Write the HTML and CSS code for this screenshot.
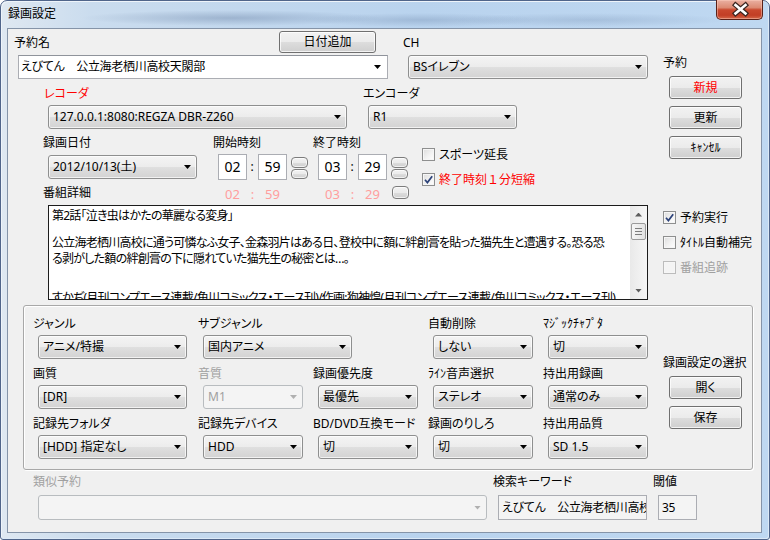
FILE: index.html
```html
<!DOCTYPE html>
<html lang="ja">
<head>
<meta charset="utf-8">
<title>録画設定</title>
<link rel="stylesheet" href="styles.css">
</head>
<body>
<div class="window">
  <div class="titlebar">
    <span class="title">録画設定</span>
    <div class="close">
      <svg width="47" height="20" viewBox="0 0 47 20">
        <path d="M18.5 6 L28.5 14.5 M28.5 6 L18.5 14.5" stroke="#3b2520" stroke-width="5" stroke-linecap="square" fill="none"/>
        <path d="M18.5 6 L28.5 14.5 M28.5 6 L18.5 14.5" stroke="#ffffff" stroke-width="2.6" stroke-linecap="square" fill="none"/>
      </svg>
    </div>
  </div>
  <div class="client">
    <div class="top">
      <div class="main">
        <div class="r1">
          <span class="lbl name-lbl">予約名</span>
          <button class="btn date-btn">日付追加</button>
          <span class="lbl ch-lbl">CH</span>
        </div>
        <div class="r2">
          <div class="combo edit name-combo"><span class="val">えびてん　公立海老栖川高校天閖部</span><span class="arrow"></span></div>
          <div class="combo ch-combo"><span class="val">BSイレブン</span><span class="arrow"></span></div>
        </div>
        <div class="r3">
          <span class="lbl red rec-lbl">レコーダ</span>
          <span class="lbl">エンコーダ</span>
        </div>
        <div class="r4">
          <div class="combo rec-combo"><span class="val">127.0.0.1:8080:REGZA DBR-Z260</span><span class="arrow"></span></div>
          <div class="combo enc-combo"><span class="val">R1</span><span class="arrow"></span></div>
        </div>
        <div class="r5">
          <div class="c-date">
            <span class="lbl">録画日付</span>
            <div class="combo date-combo"><span class="val">2012/10/13(土)</span><span class="arrow"></span></div>
            <span class="lbl detail-lbl">番組詳細</span>
          </div>
          <div class="c-time">
            <span class="lbl">開始時刻</span>
            <div class="time">
              <span class="tbox">02</span><span class="colon">:</span><span class="tbox">59</span>
              <span class="spin"><span class="sbtn"></span><span class="sbtn low"></span></span>
            </div>
            <div class="ref"><span class="rv">02</span><span class="rc">:</span><span class="rv">59</span></div>
          </div>
          <div class="c-time c-end">
            <span class="lbl">終了時刻</span>
            <div class="time">
              <span class="tbox">03</span><span class="colon">:</span><span class="tbox">29</span>
              <span class="spin"><span class="sbtn"></span><span class="sbtn low"></span></span>
            </div>
            <div class="ref"><span class="rv">03</span><span class="rc">:</span><span class="rv">29</span><span class="sbtn big"></span></div>
          </div>
          <div class="c-checks">
            <div class="chk"><span class="box"></span><span>スポーツ延長</span></div>
            <div class="chk red gap"><span class="box"><svg width="11" height="11" viewBox="0 0 11 11"><path d="M2 5.8 L4.4 8.6 L9.2 2.2" stroke="#2c4279" stroke-width="1.7" fill="none"/></svg></span><span>終了時刻<span class="fw">１</span>分短縮</span></div>
          </div>
        </div>
        <div class="tarea">
          <div class="tcontent">
            <div class="ln">第2話「泣き虫はかたの華麗なる変身」</div>
            <div class="blank1"></div>
            <div class="ln">公立海老栖川高校に通う可憐なふ女子、金森羽片はある日、登校中に額に絆創膏を貼った猫先生と遭遇する。恐る恐</div>
            <div class="ln">る剥がした額の絆創膏の下に隠れていた猫先生の秘密とは…。</div>
            <div class="blank2"></div>
            <div class="ln">すかぢ(月刊コンプエース連載/角川コミックス・エース刊)/作画:狗神煌(月刊コンプエース連載/角川コミックス・エース刊)</div>
          </div>
          <div class="vscroll">
            <div class="sb-btn"><span class="tri up"></span></div>
            <div class="sb-thumb"><span></span><span></span><span></span></div>
            <div class="sb-track"></div>
            <div class="sb-btn"><span class="tri down"></span></div>
          </div>
        </div>
      </div>
      <div class="side">
        <span class="lbl rsv-lbl">予約</span>
        <button class="btn side-btn red first">新規</button>
        <button class="btn side-btn">更新</button>
        <button class="btn side-btn">ｷｬﾝｾﾙ</button>
        <div class="chk side-chk1"><span class="box"><svg width="11" height="11" viewBox="0 0 11 11"><path d="M2 5.8 L4.4 8.6 L9.2 2.2" stroke="#2c4279" stroke-width="1.7" fill="none"/></svg></span><span>予約実行</span></div>
        <div class="chk gap"><span class="box"></span><span>ﾀｲﾄﾙ自動補完</span></div>
        <div class="chk gap disabled"><span class="box"></span><span>番組追跡</span></div>
      </div>
    </div>

    <div class="group">
      <div class="ggrid">
        <div class="fld"><span class="lbl">ジャンル</span><div class="combo wide"><span class="val">アニメ/特撮</span><span class="arrow"></span></div></div>
        <div class="fld span2"><span class="lbl">サブジャンル</span><div class="combo wide"><span class="val">国内アニメ</span><span class="arrow"></span></div></div>
        <div class="fld"><span class="lbl">自動削除</span><div class="combo"><span class="val">しない</span><span class="arrow"></span></div></div>
        <div class="fld"><span class="lbl">ﾏｼﾞｯｸﾁｬﾌﾟﾀ</span><div class="combo"><span class="val">切</span><span class="arrow"></span></div></div>

        <div class="fld"><span class="lbl">画質</span><div class="combo wide"><span class="val">[DR]</span><span class="arrow"></span></div></div>
        <div class="fld"><span class="lbl gray">音質</span><div class="combo disabled"><span class="val">M1</span><span class="arrow"></span></div></div>
        <div class="fld"><span class="lbl">録画優先度</span><div class="combo"><span class="val">最優先</span><span class="arrow"></span></div></div>
        <div class="fld"><span class="lbl">ﾗｲﾝ音声選択</span><div class="combo"><span class="val">ステレオ</span><span class="arrow"></span></div></div>
        <div class="fld"><span class="lbl">持出用録画</span><div class="combo"><span class="val">通常のみ</span><span class="arrow"></span></div></div>

        <div class="fld"><span class="lbl">記録先フォルダ</span><div class="combo wide"><span class="val">[HDD] 指定なし</span><span class="arrow"></span></div></div>
        <div class="fld"><span class="lbl">記録先デバイス</span><div class="combo"><span class="val">HDD</span><span class="arrow"></span></div></div>
        <div class="fld"><span class="lbl">BD/DVD互換モード</span><div class="combo"><span class="val">切</span><span class="arrow"></span></div></div>
        <div class="fld"><span class="lbl">録画のりしろ</span><div class="combo"><span class="val">切</span><span class="arrow"></span></div></div>
        <div class="fld"><span class="lbl">持出用品質</span><div class="combo"><span class="val">SD 1.5</span><span class="arrow"></span></div></div>
      </div>
      <div class="gside">
        <span class="lbl">録画設定の選択</span>
        <button class="btn side-btn first">開く</button>
        <button class="btn side-btn">保存</button>
      </div>
    </div>

    <div class="bottom">
      <div class="bf1">
        <span class="lbl gray">類似予約</span>
        <div class="combo disabled similar"><span class="val"></span><span class="arrow"></span></div>
      </div>
      <div class="bf2">
        <span class="lbl">検索キーワード</span>
        <div class="tbx kw"><span class="val">えびてん　公立海老栖川高校</span></div>
      </div>
      <div class="bf3">
        <span class="lbl">閾値</span>
        <div class="tbx th"><span class="val">35</span></div>
      </div>
    </div>
  </div>
</div>
</body>
</html>
```

FILE: styles.css
```css
* { box-sizing: border-box; margin: 0; padding: 0; }
html, body { width: 770px; height: 540px; overflow: hidden; }
body {
  font-family: "Noto Sans", "Noto Sans CJK JP", sans-serif;
  font-size: 12px;
  line-height: 16px;
  color: #000;
  font-feature-settings: "palt" 1;
  background: #ffffff;
}

/* window frame */
.window {
  width: 770px;
  height: 540px;
  display: flex;
  flex-direction: column;
  padding: 0 7px 6px 6px;
  border: 1px solid #50658a;
  border-radius: 7px 7px 3px 3px;
  background:
    radial-gradient(150px 8px at 230px 17px, rgba(70, 95, 135, 0.30), rgba(70, 95, 135, 0)),
    radial-gradient(120px 7px at 420px 19px, rgba(70, 95, 135, 0.22), rgba(70, 95, 135, 0)),
    radial-gradient(140px 7px at 590px 19px, rgba(70, 95, 135, 0.18), rgba(70, 95, 135, 0)),
    linear-gradient(to right, #dfe8f1 0, #cadcee 90px, #b9d3ee 420px, #bfd8f1 770px);
  box-shadow: inset 1px 1px 0 #eef4fa, inset -1px -1px 0 #dce9f6;
}
.titlebar {
  flex: none;
  height: 27px;
  display: flex;
  justify-content: space-between;
  align-items: flex-start;
}
.title {
  margin: 5px 0 0 1px;
  line-height: 16px;
}
.close {
  width: 47px;
  height: 20px;
  margin: -1px -1px 0 0;
  border: 1px solid #5a2118;
  border-top: none;
  border-radius: 0 0 5px 5px;
  background: linear-gradient(#eab0a2 0%, #dc8a73 40%, #c9482e 52%, #c23e25 80%, #d4684a 100%);
  box-shadow: inset 0 0 0 1px rgba(255, 210, 195, 0.45);
}
.close svg { display: block; margin-top: -1px; }

.client {
  width: 755px;
  height: 505px;
  border: 1px solid #8594a8;
  background: #f0f0f0;
  display: flex;
  flex-direction: column;
}

/* generic controls */
.lbl { display: block; height: 16px; line-height: 16px; white-space: nowrap; }
.red { color: #ff0000; }
.gray { color: #a0a0a0; }
.fw { font-feature-settings: normal; }

.btn {
  font: inherit;
  font-feature-settings: "palt" 1;
  color: #000;
  display: flex;
  align-items: center;
  justify-content: center;
  border: 1px solid #707070;
  border-radius: 3px;
  background: linear-gradient(#f2f2f2 0%, #ebebeb 50%, #dddddd 51%, #cfcfcf 100%);
  box-shadow: inset 0 0 0 1px rgba(255, 255, 255, 0.75);
}
.btn.red { color: #ff0000; }

.combo {
  display: flex;
  align-items: center;
  height: 24px;
  border: 1px solid #8e8f8f;
  border-radius: 3px;
  background: linear-gradient(#f4f4f4 0%, #ececec 50%, #dfdfdf 51%, #d3d3d3 100%);
  box-shadow: inset 0 0 0 1px rgba(255, 255, 255, 0.7);
  white-space: nowrap;
  overflow: hidden;
}
.combo .val { flex: 1; padding-left: 4px; overflow: hidden; }
.arrow {
  flex: none;
  width: 7px;
  height: 4px;
  margin-right: 5px;
  background: #000;
  clip-path: polygon(0 0, 100% 0, 50% 100%);
}
.combo.edit {
  border-color: #abadb3;
  border-top-color: #8f939b;
  border-radius: 0;
  background: #ffffff;
  box-shadow: none;
}
.combo.edit .val { padding-left: 2px; letter-spacing: -0.3px; }
.combo.edit .arrow { margin-right: 6px; }
.combo.disabled {
  border-color: #b8bcbf;
  background: #f4f4f4;
  box-shadow: none;
  color: #a0a0a0;
}
.combo.disabled .arrow { background: #b0b0b0; }

.chk { display: flex; align-items: center; height: 13px; white-space: nowrap; }
.chk .box {
  flex: none;
  width: 13px;
  height: 13px;
  margin-right: 4px;
  border: 1px solid #8e8f8f;
  background: linear-gradient(135deg, #dcdcdc 0%, #f2f2f2 55%, #ffffff 100%);
  box-shadow: inset 0 0 0 1px #f6f6f6;
}
.chk .box svg { display: block; }
.chk.gap { margin-top: 12px; }
.chk.disabled { color: #a0a0a0; }
.chk.disabled .box { border-color: #bcbcbc; background: #f4f4f4; }

/* top area */
.top { flex: none; height: 276px; display: flex; }
.main { width: 647px; flex: none; }
.side { flex: 1; padding-left: 8px; display: flex; flex-direction: column; align-items: flex-start; }

.r1 { display: flex; align-items: flex-start; height: 26px; }
.name-lbl { margin: 6px 0 0 6px; width: 265px; }
.date-btn { margin-top: 2px; width: 97px; height: 22px; }
.ch-lbl { margin: 6px 0 0 27px; }

.r2 { display: flex; height: 24px; }
.name-combo { margin-left: 10px; width: 370px; }
.ch-combo { margin-left: 20px; width: 240px; }

.r3 { display: flex; height: 26px; align-items: flex-start; }
.r3 .lbl { margin-top: 7px; }
.rec-lbl { margin-left: 36px; width: 319px; }

.r4 { display: flex; height: 24px; }
.rec-combo { margin-left: 40px; width: 299px; }
.enc-combo { margin-left: 21px; width: 149px; }

.r5 { display: flex; height: 76px; align-items: flex-start; }
.c-date { width: 170px; margin-left: 35px; display: flex; flex-direction: column; align-items: flex-start; }
.c-date > .lbl { margin-top: 6px; }
.date-combo { margin: 4px 0 0 5px; width: 149px; }
.c-date > .detail-lbl { margin-top: 6px; }

.c-time { width: 100px; display: flex; flex-direction: column; align-items: flex-start; }
.c-end { width: 109px; }
.c-time > .lbl { margin-top: 6px; }
.time { display: flex; align-items: flex-start; height: 26px; margin: 3px 0 0 5px; }
.tbox {
  width: 29px;
  height: 26px;
  border: 1px solid #abadb3;
  background: #fff;
  text-align: center;
  font-size: 14px;
  line-height: 24px;
}
.colon { width: 11px; text-align: center; line-height: 26px; padding-right: 1px; }
.spin { display: flex; flex-direction: column; margin: 3px 0 0 4px; }
.sbtn {
  display: block;
  width: 17px;
  height: 11px;
  border: 1px solid #7c7c7c;
  border-radius: 4px;
  background: linear-gradient(#f2f2f2 0%, #ebebeb 50%, #dddddd 51%, #cfcfcf 100%);
  box-shadow: inset 0 0 0 1px rgba(255, 255, 255, 0.7);
}
.sbtn.low { height: 10px; margin-top: 1px; }
.sbtn.big { height: 13px; margin-left: 5px; }
.ref { display: flex; align-items: flex-start; height: 16px; margin: 6px 0 0 5px; color: #ff9e9e; font-size: 13px; }
.rv { width: 29px; text-align: center; }
.rc { width: 11px; text-align: center; }

.c-checks { padding-top: 19px; }

.tarea {
  margin-left: 40px;
  width: 600px;
  height: 95px;
  border: 1px solid #1c1c1c;
  background: #fff;
  display: flex;
}
.tcontent { flex: 1; overflow: hidden; padding: 2px 0 0 3px; letter-spacing: -0.75px; }
.ln { height: 16px; line-height: 16px; white-space: nowrap; }
.blank1 { height: 11px; }
.blank2 { height: 23px; }
.vscroll { width: 17px; flex: none; display: flex; flex-direction: column; background: linear-gradient(to right, #e9e9e9, #f6f6f6); }
.sb-btn { height: 17px; display: flex; align-items: center; justify-content: center; }
.tri { width: 7px; height: 4px; background: #5d5d5d; }
.tri.up { clip-path: polygon(50% 0, 100% 100%, 0 100%); }
.tri.down { clip-path: polygon(0 0, 100% 0, 50% 100%); }
.sb-thumb {
  height: 17px;
  margin: 0 1px;
  border: 1px solid #9a9a9a;
  border-radius: 2px;
  background: linear-gradient(to right, #f6f6f6, #e2e2e2);
  display: flex;
  flex-direction: column;
  align-items: center;
  justify-content: center;
  gap: 2px;
}
.sb-thumb span { display: block; width: 7px; height: 1px; background: #7d7d7d; }
.sb-track { flex: 1; }

.rsv-lbl { margin-top: 26px; }
.side-btn { width: 73px; height: 23px; margin: 7px 0 0 6px; }
.side-btn.first { margin-top: 5px; }
.side-chk1 { margin-top: 52px; }

/* group box */
.group {
  flex: none;
  margin-left: 15px;
  width: 730px;
  height: 165px;
  border: 1px solid #a8a8a8;
  border-radius: 3px;
  box-shadow: inset 1px 1px 0 #ffffff, 1px 1px 0 #ffffff;
  display: flex;
  align-items: flex-start;
}
.ggrid {
  display: grid;
  grid-template-columns: 165px 115px 115px 115px 115px;
  grid-auto-rows: 43px;
  row-gap: 7px;
  padding: 10px 0 0 9px;
}
.fld { display: flex; flex-direction: column; align-items: flex-start; }
.fld.span2 { grid-column: span 2; }
.fld .combo { margin: 3px 0 0 5px; width: 100px; }
.fld .combo.wide { width: 149px; }
.gside { margin: 49px 0 0 5px; display: flex; flex-direction: column; align-items: flex-start; }

/* bottom */
.bottom { display: flex; margin: 4px 0 0 25px; align-items: flex-start; }
.bf1 { width: 460px; }
.bf2 { width: 160px; }
.bf1 .combo, .tbx { margin: 5px 0 0 5px; height: 25px; }
.similar { width: 449px; }
.tbx {
  display: flex;
  align-items: center;
  border: 1px solid #abadb3;
  background: #f4f4f4;
  white-space: nowrap;
  overflow: hidden;
}
.tbx .val { padding-left: 3px; letter-spacing: -0.3px; }
.kw { width: 149px; }
.th { width: 39px; }
```
